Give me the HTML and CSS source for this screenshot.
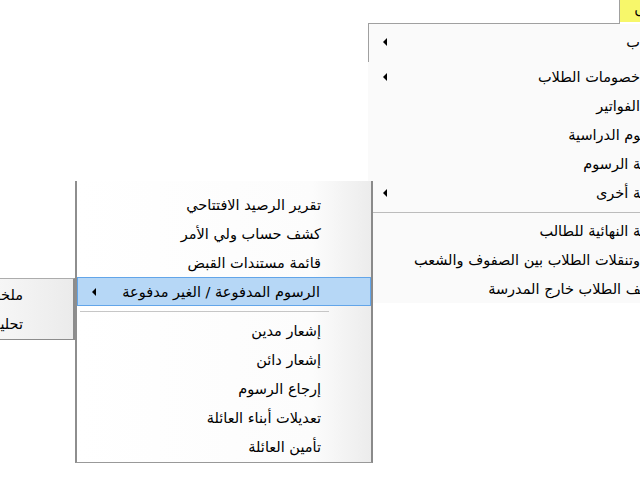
FILE: index.html
```html
<!DOCTYPE html>
<html lang="ar">
<head>
<meta charset="utf-8">
<title>Menu</title>
<link rel="stylesheet" href="styles.css">
</head>
<body>
<div class="screen">
  <div class="field"></div>
  <div class="marker"><span>ں</span></div>

  <div class="menu m1">
    <div class="item first"><i class="arrow"></i><span class="label">ب</span></div>
    <div class="item"><i class="arrow"></i><span class="label">خصومات الطلاب</span></div>
    <div class="item"><span class="label">الفواتير</span></div>
    <div class="item"><span class="label cut">ـوم الدراسية</span></div>
    <div class="item"><span class="label cut">ـة الرسوم</span></div>
    <div class="item"><i class="arrow"></i><span class="label cut">ـة أخرى</span></div>
    <div class="sep"></div>
    <div class="item"><span class="label cut">ـة النهائية للطالب</span></div>
    <div class="item"><span class="label">وتنقلات الطلاب بين الصفوف والشعب</span></div>
    <div class="item"><span class="label cut">ـف الطلاب خارج المدرسة</span></div>
  </div>

  <div class="menu m2">
    <div class="item"><span class="label">تقرير الرصيد الافتتاحي</span></div>
    <div class="item"><span class="label">كشف حساب ولي الأمر</span></div>
    <div class="item"><span class="label">قائمة مستندات القبض</span></div>
    <div class="item active"><i class="arrow"></i><span class="label">الرسوم المدفوعة / الغير مدفوعة</span></div>
    <div class="sep"></div>
    <div class="item"><span class="label">إشعار مدين</span></div>
    <div class="item"><span class="label">إشعار دائن</span></div>
    <div class="item"><span class="label">إرجاع الرسوم</span></div>
    <div class="item"><span class="label">تعديلات أبناء العائلة</span></div>
    <div class="item"><span class="label">تأمين العائلة</span></div>
  </div>

  <div class="menu m3">
    <div class="item"><span class="label">ملخص الرسوم</span></div>
    <div class="item"><span class="label">تحليل الرسوم</span></div>
  </div>
</div>
</body>
</html>
```

FILE: styles.css
```css
html, body {
  margin: 0;
  padding: 0;
  width: 640px;
  height: 480px;
  overflow: hidden;
  background: #ffffff;
}

.screen {
  position: relative;
  width: 640px;
  height: 480px;
  overflow: hidden;
  font-family: "DejaVu Sans", sans-serif;
  font-size: 14.5px;
  color: #000;
}

.field {
  position: absolute;
  left: 368px;
  top: -1px;
  width: 251px;
  height: 24px;
  background: #fff;
  border-right: 1px solid #a0a0a0;
  border-bottom: 1px solid #a0a0a0;
}

.marker {
  position: absolute;
  left: 620px;
  top: 0;
  width: 20px;
  height: 22px;
  background: #f7f76a;
  overflow: hidden;
}

.marker span {
  position: absolute;
  right: -5px;
  top: 1px;
  direction: rtl;
}

.menu {
  position: absolute;
  box-sizing: border-box;
}

.item {
  display: flex;
  align-items: center;
  height: 29px;
  box-sizing: border-box;
  padding-right: 50px;
  white-space: nowrap;
}

.arrow {
  display: block;
  width: 0;
  height: 0;
  margin-left: 15px;
  border-right: 4px solid #000;
  border-top: 4px solid transparent;
  border-bottom: 4px solid transparent;
}

.label {
  margin-left: auto;
  direction: rtl;
  line-height: 18px;
}

.label.cut {
  margin-right: -5px;
}

.sep {
  position: relative;
}

.sep::after {
  content: "";
  position: absolute;
  top: 5px;
  height: 1px;
  background: #bcbcbc;
}

/* level 1 */
.m1 {
  left: 368px;
  top: 24px;
  width: 322px;
  background: #fafafa;
}

.m1 .first {
  height: 38px;
  padding-bottom: 2px;
  border-left: 1px solid #a0a0a0;
}

.m1 .first .arrow {
  margin-left: 14px;
}

.m1 .sep {
  height: 9px;
}

.m1 .sep::after {
  left: 5px;
  right: 0;
}

/* level 2 */
.m2 {
  left: 75px;
  top: 181px;
  width: 298px;
  padding: 9px 0 1px;
  border-left: 2px solid #8e8e8e;
  border-right: 2px solid #8a8a8a;
  border-bottom: 1px solid #999;
  background: linear-gradient(to right, #ffffff 0%, #fcfcfc 80%, #ececec 100%);
  z-index: 2;
}

.m2 .sep {
  height: 10px;
}

.m2 .sep::after {
  left: 3px;
  right: 42px;
  background: #c6c6c6;
}

.m2 .active {
  background: #b6d7f6;
  border: 1px solid #62a5e9;
}

.m2 .active .arrow {
  margin-left: 14px;
}

/* level 3 */
.m3 {
  left: -223px;
  top: 278px;
  width: 298px;
  padding: 1px 0;
  border-top: 1px solid #acacac;
  border-right: 2px solid #8c8c8c;
  border-bottom: 1px solid #8c8c8c;
  background: linear-gradient(to right, #fafafa 0%, #f6f6f6 75%, #ebebeb 100%);
  z-index: 3;
}
```
